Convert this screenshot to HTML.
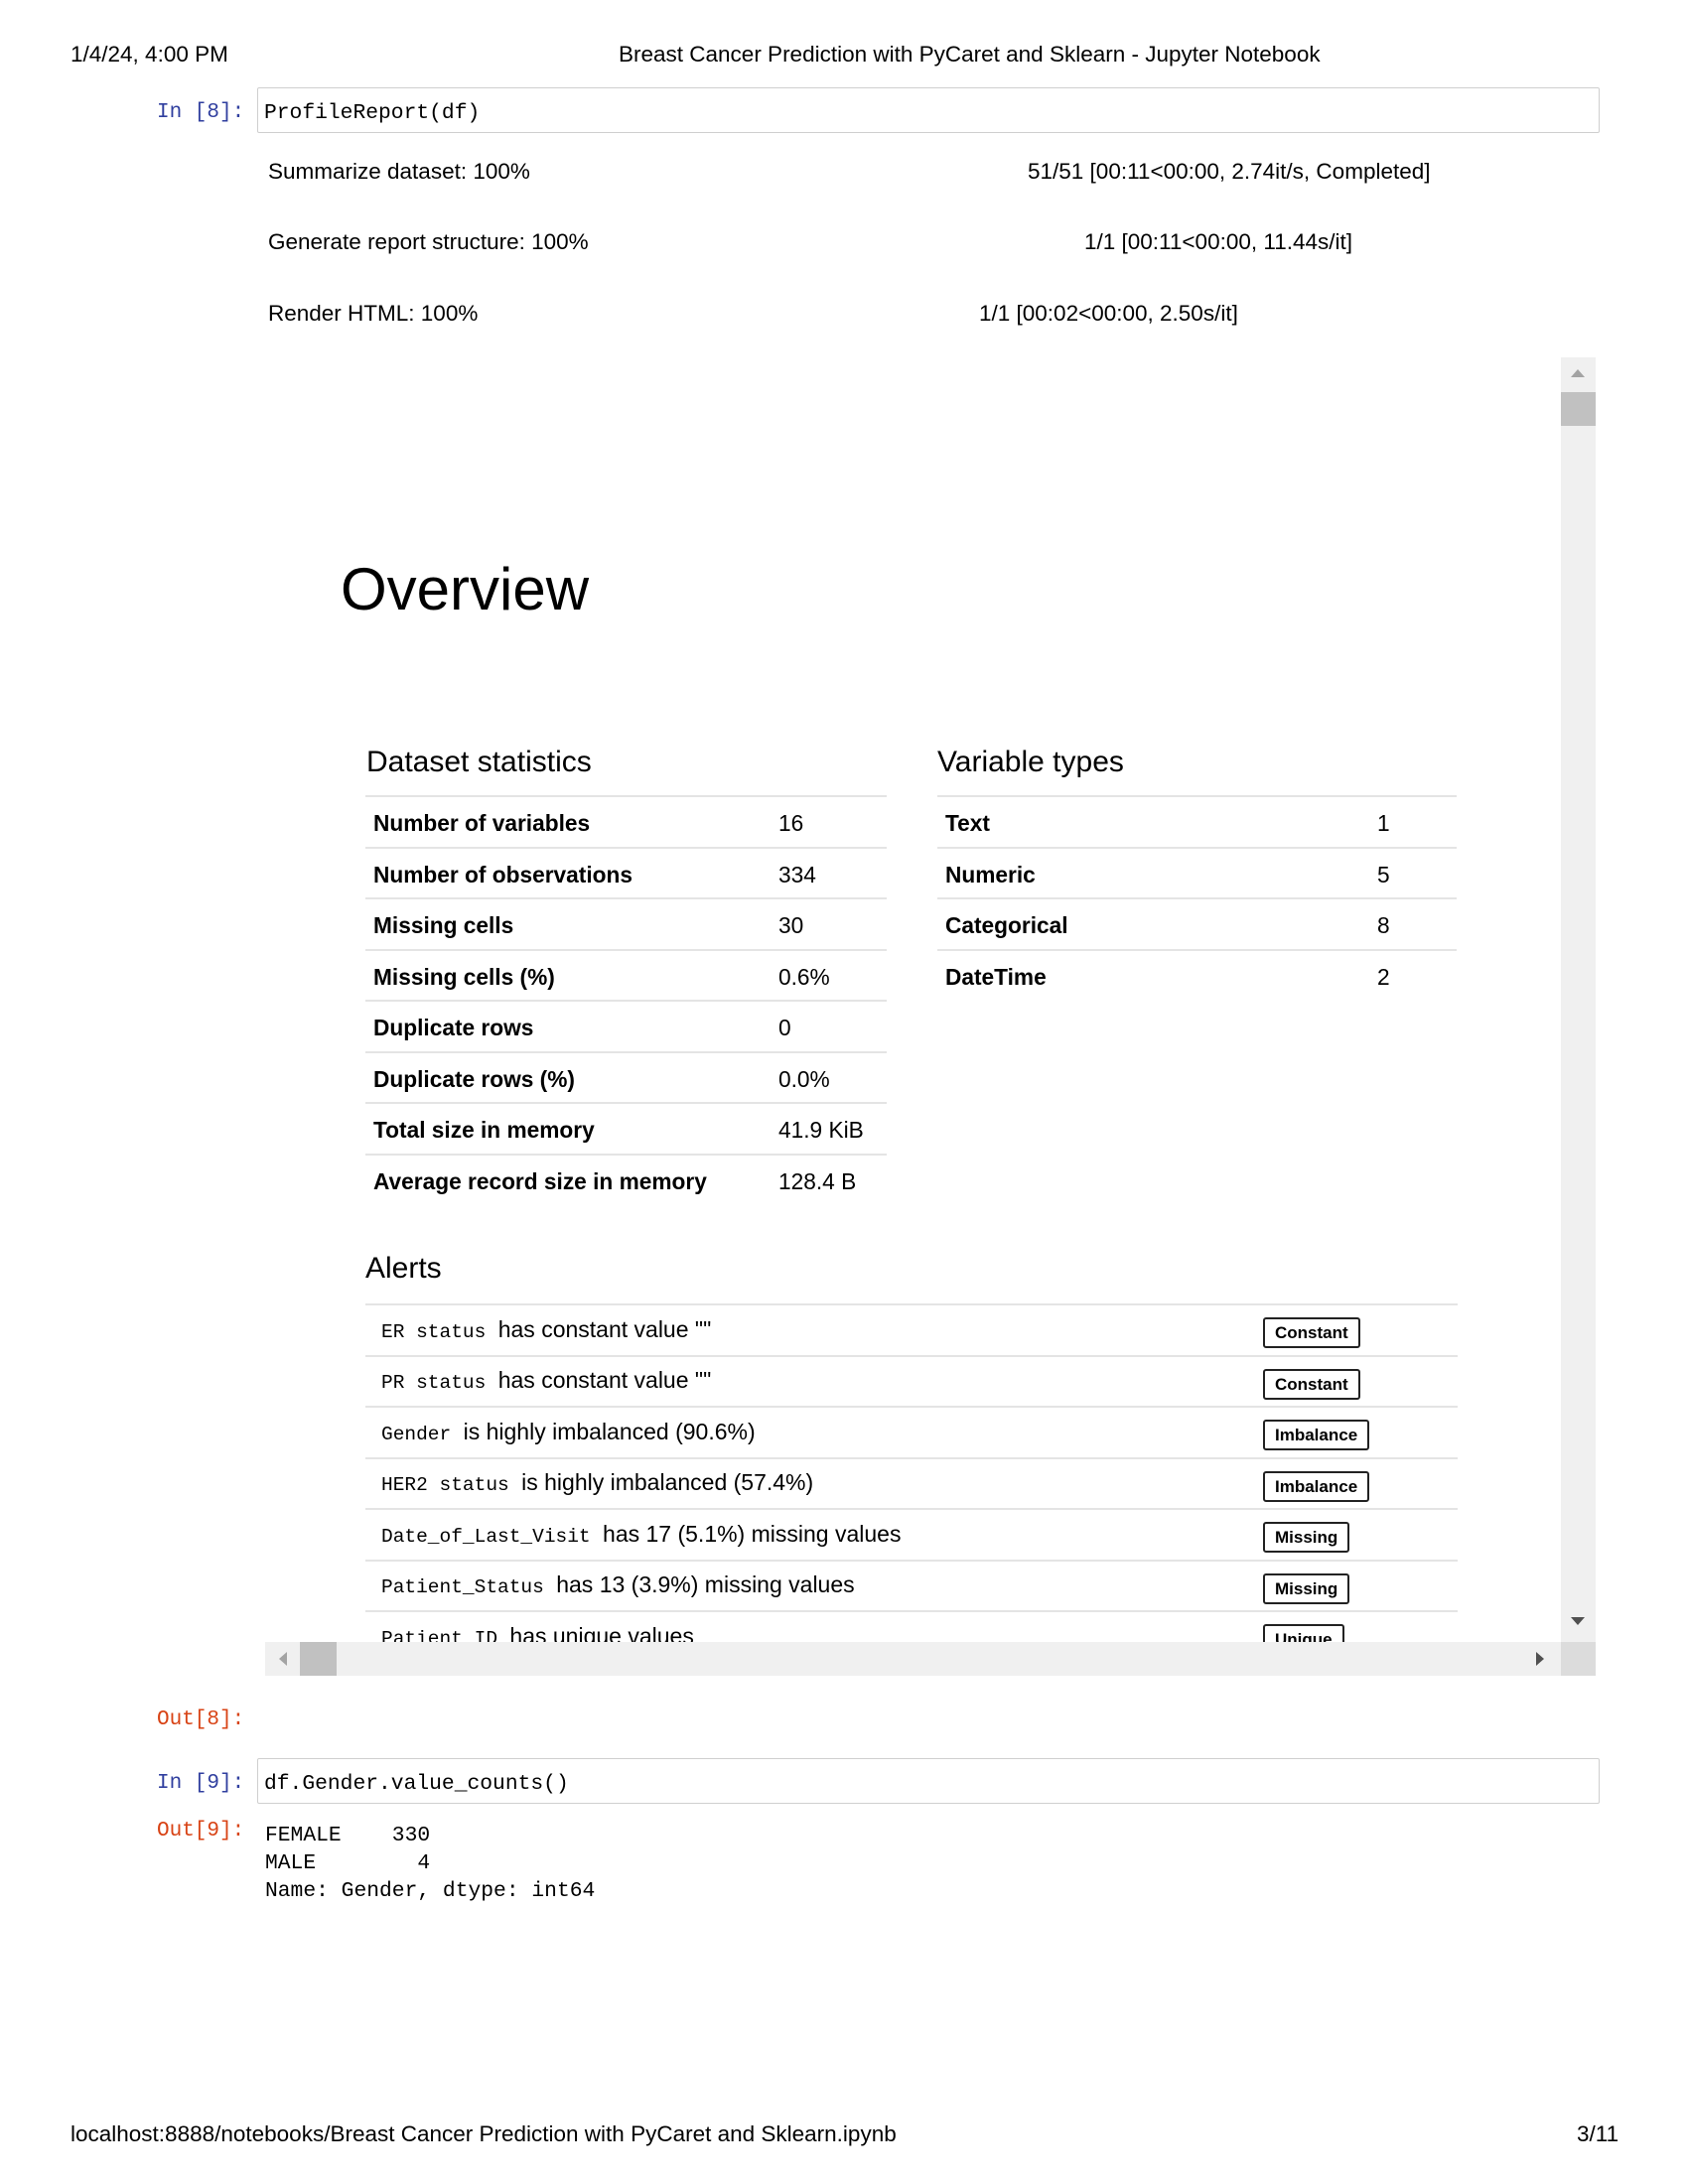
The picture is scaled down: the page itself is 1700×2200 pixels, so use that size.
<!DOCTYPE html>
<html><head><meta charset="utf-8"><style>
*{margin:0;padding:0;box-sizing:border-box}
body{width:1700px;height:2200px;background:#fff;position:relative;font-family:"Liberation Sans",sans-serif;color:#000;overflow:hidden}
.a{position:absolute;white-space:nowrap}
.m{font-family:"Liberation Mono",monospace}
.cell{position:absolute;left:259px;width:1352px;border:1.5px solid #cfcfcf;border-radius:2px;background:#fff}
.pin{color:#303f9f;font-size:21px}
.pout{color:#d84315;font-size:21px}
.t22{font-size:22.5px}
.row{position:absolute;border-top:2px solid #e4e4e4;height:52px}
.lab{position:absolute;left:8px;top:13px;font-weight:bold;font-size:22.7px}
.val{position:absolute;top:13px;font-size:22.7px}
.badge{position:absolute;left:1272px;height:31px;border:2px solid #222;border-radius:3px;font-weight:bold;font-size:17px;line-height:27px;padding:0 10px}
.al{position:absolute;left:384px;font-size:23px}
.al code{font-family:"Liberation Mono",monospace;font-size:19.5px;margin-right:6px}
</style></head><body>
<div class="a t22" style="left:71px;top:42px">1/4/24, 4:00 PM</div>
<div class="a t22" style="left:623px;top:42px">Breast Cancer Prediction with PyCaret and Sklearn - Jupyter Notebook</div>

<div class="a m pin" style="left:158px;top:102px">In [8]:</div>
<div class="cell" style="top:88px;height:46px"><div class="a m" style="left:6px;top:13px;font-size:21.3px">ProfileReport(df)</div></div>

<div class="a t22" style="left:270px;top:160px">Summarize dataset: 100%</div>
<div class="a t22" style="left:1035px;top:160px">51/51 [00:11&lt;00:00, 2.74it/s, Completed]</div>
<div class="a t22" style="left:270px;top:231px">Generate report structure: 100%</div>
<div class="a t22" style="left:1092px;top:231px">1/1 [00:11&lt;00:00, 11.44s/it]</div>
<div class="a t22" style="left:270px;top:303px">Render HTML: 100%</div>
<div class="a t22" style="left:986px;top:303px">1/1 [00:02&lt;00:00, 2.50s/it]</div>

<div style="position:absolute;left:267px;top:360px;width:1340px;height:1328px;overflow:hidden">
 <div class="a" style="left:76px;top:199px;font-size:60px">Overview</div>
 <div class="a" style="left:102px;top:391px;font-size:30px">Dataset statistics</div>
 <div class="a" style="left:677px;top:391px;font-size:30px">Variable types</div>
</div>
<div style="position:absolute;left:0;top:0;width:1700px;height:1654px;overflow:hidden">
 <div class="row" style="left:368px;top:801px;width:525px"><span class="lab">Number of variables</span><span class="val" style="left:416px">16</span></div>
 <div class="row" style="left:368px;top:853px;width:525px"><span class="lab">Number of observations</span><span class="val" style="left:416px">334</span></div>
 <div class="row" style="left:368px;top:904px;width:525px"><span class="lab">Missing cells</span><span class="val" style="left:416px">30</span></div>
 <div class="row" style="left:368px;top:956px;width:525px"><span class="lab">Missing cells (%)</span><span class="val" style="left:416px">0.6%</span></div>
 <div class="row" style="left:368px;top:1007px;width:525px"><span class="lab">Duplicate rows</span><span class="val" style="left:416px">0</span></div>
 <div class="row" style="left:368px;top:1059px;width:525px"><span class="lab">Duplicate rows (%)</span><span class="val" style="left:416px">0.0%</span></div>
 <div class="row" style="left:368px;top:1110px;width:525px"><span class="lab">Total size in memory</span><span class="val" style="left:416px">41.9 KiB</span></div>
 <div class="row" style="left:368px;top:1162px;width:525px"><span class="lab">Average record size in memory</span><span class="val" style="left:416px">128.4 B</span></div>

 <div class="row" style="left:944px;top:801px;width:523px"><span class="lab">Text</span><span class="val" style="left:443px">1</span></div>
 <div class="row" style="left:944px;top:853px;width:523px"><span class="lab">Numeric</span><span class="val" style="left:443px">5</span></div>
 <div class="row" style="left:944px;top:904px;width:523px"><span class="lab">Categorical</span><span class="val" style="left:443px">8</span></div>
 <div class="row" style="left:944px;top:956px;width:523px"><span class="lab">DateTime</span><span class="val" style="left:443px">2</span></div>

 <div class="a" style="left:368px;top:1261px;font-size:30px">Alerts</div>
 <div class="row" style="left:368px;top:1313px;width:1100px"></div>
 <div class="row" style="left:368px;top:1365px;width:1100px"></div>
 <div class="row" style="left:368px;top:1416px;width:1100px"></div>
 <div class="row" style="left:368px;top:1468px;width:1100px"></div>
 <div class="row" style="left:368px;top:1519px;width:1100px"></div>
 <div class="row" style="left:368px;top:1571px;width:1100px"></div>
 <div class="row" style="left:368px;top:1622px;width:1100px"></div>

 <div class="al" style="top:1326px"><code>ER status</code> has constant value ""</div>
 <div class="al" style="top:1377px"><code>PR status</code> has constant value ""</div>
 <div class="al" style="top:1429px"><code>Gender</code> is highly imbalanced (90.6%)</div>
 <div class="al" style="top:1480px"><code>HER2 status</code> is highly imbalanced (57.4%)</div>
 <div class="al" style="top:1532px"><code>Date_of_Last_Visit</code> has 17 (5.1%) missing values</div>
 <div class="al" style="top:1583px"><code>Patient_Status</code> has 13 (3.9%) missing values</div>
 <div class="al" style="top:1635px"><code>Patient_ID</code> has unique values</div>

 <div class="badge" style="top:1327px">Constant</div>
 <div class="badge" style="top:1379px">Constant</div>
 <div class="badge" style="top:1430px">Imbalance</div>
 <div class="badge" style="top:1482px">Imbalance</div>
 <div class="badge" style="top:1533px">Missing</div>
 <div class="badge" style="top:1585px">Missing</div>
 <div class="badge" style="top:1636px">Unique</div>
</div>

<div style="position:absolute;left:1572px;top:360px;width:35px;height:1294px;background:#f0f0f0"></div>
<div style="position:absolute;left:1572px;top:395px;width:35px;height:34px;background:#c1c1c1"></div>
<div class="a" style="left:1582px;top:372px;width:0;height:0;border-left:7px solid transparent;border-right:7px solid transparent;border-bottom:8px solid #a3a3a3"></div>
<div class="a" style="left:1582px;top:1629px;width:0;height:0;border-left:7px solid transparent;border-right:7px solid transparent;border-top:8px solid #505050"></div>
<div style="position:absolute;left:267px;top:1654px;width:1305px;height:34px;background:#f0f0f0"></div>
<div style="position:absolute;left:1572px;top:1654px;width:35px;height:34px;background:#dcdcdc"></div>
<div style="position:absolute;left:302px;top:1654px;width:37px;height:34px;background:#c1c1c1"></div>
<div class="a" style="left:281px;top:1664px;width:0;height:0;border-top:7px solid transparent;border-bottom:7px solid transparent;border-right:8px solid #a3a3a3"></div>
<div class="a" style="left:1547px;top:1664px;width:0;height:0;border-top:7px solid transparent;border-bottom:7px solid transparent;border-left:8px solid #505050"></div>

<div class="a m pout" style="left:158px;top:1721px">Out[8]:</div>

<div class="a m pin" style="left:158px;top:1785px">In [9]:</div>
<div class="cell" style="top:1771px;height:46px"><div class="a m" style="left:6px;top:13px;font-size:21.3px">df.Gender.value_counts()</div></div>
<div class="a m pout" style="left:158px;top:1833px">Out[9]:</div>
<div class="a m" style="left:267px;top:1835px;font-size:21.3px;line-height:28px;white-space:pre">FEMALE    330
MALE        4
Name: Gender, dtype: int64</div>

<div class="a t22" style="left:71px;top:2137px">localhost:8888/notebooks/Breast Cancer Prediction with PyCaret and Sklearn.ipynb</div>
<div class="a t22" style="left:1588px;top:2137px">3/11</div>
</body></html>
